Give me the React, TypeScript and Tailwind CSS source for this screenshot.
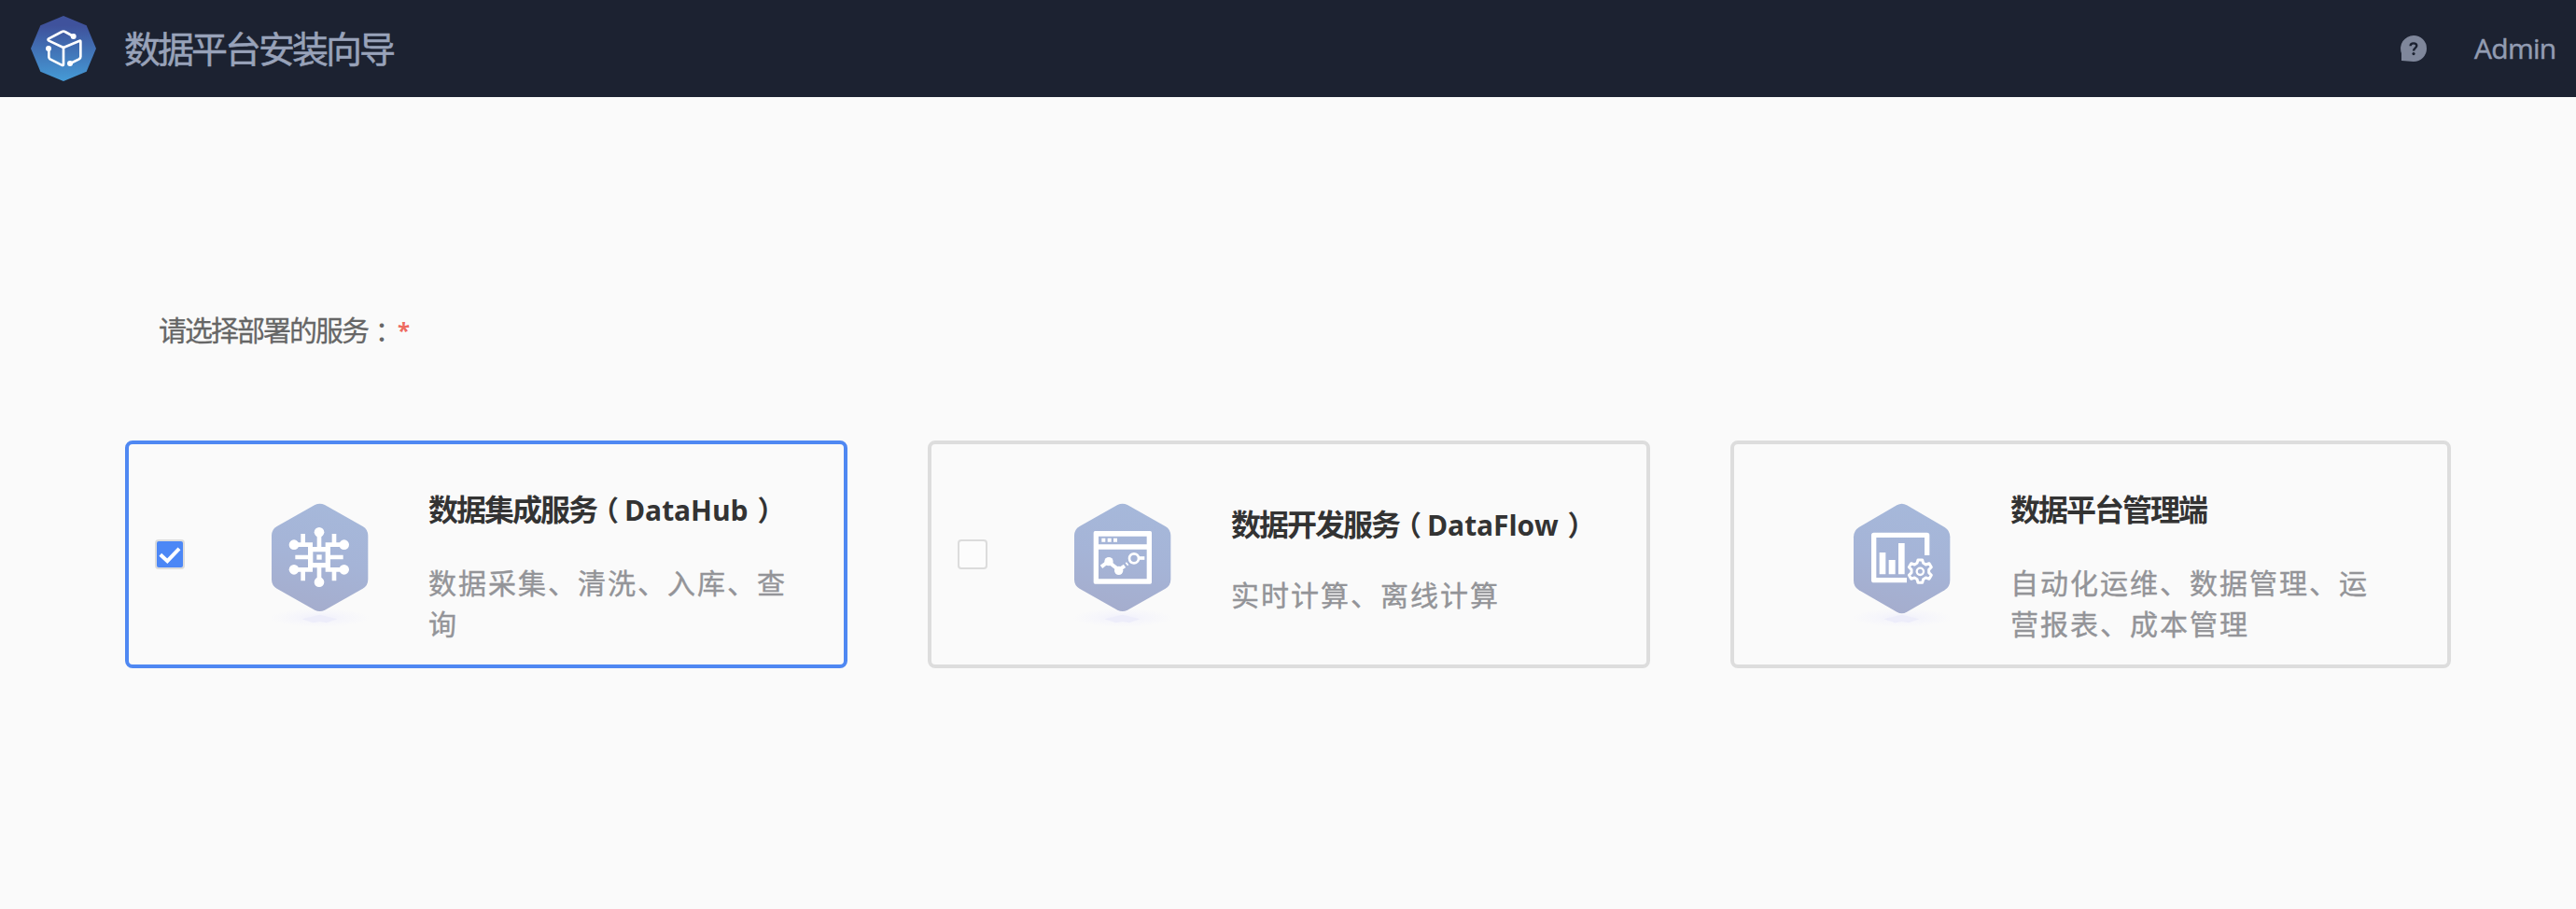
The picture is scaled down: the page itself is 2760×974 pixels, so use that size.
import React from "react";

const Logo = () => (
  <svg className="h-[70px] w-[70px] shrink-0" viewBox="99 51 210 210" fill="none">
    <defs>
      <linearGradient id="logo" x1="0" y1="0" x2="0" y2="1">
        <stop offset="0.15" stopColor="#3f529c" />
        <stop offset="1" stopColor="#459bd6" />
      </linearGradient>
    </defs>
    <path d="M204 51L278 82L309 156L278 230L204 261L130 230L99 156L130 82Z" fill="url(#logo)" />
    <g stroke="#fff" strokeWidth="8" strokeLinecap="round" strokeLinejoin="round">
      <path d="M236 117L209 102Q204 99 199 102L157 124Q152 128 157 131L204 153L256 131Q259 130 259 134V182Q259 187 254 190L226 204" />
      <path d="M204 153V207Q204 212 198 209L161 190Q157 187 157 183V157" />
    </g>
    <circle cx="236" cy="117" r="9" fill="#fff" />
    <circle cx="156" cy="156" r="9" fill="#fff" />
    <circle cx="225" cy="204" r="9" fill="#fff" />
  </svg>
);

const HelpIcon = () => (
  <svg className="h-7 w-7" viewBox="0 0 28 28" fill="none">
    <path d="M14 0A14 14 0 1 1 14 28L1 27V19A14 14 0 0 1 14 0Z" fill="#7f879b" />
    <path d="M10.6 11.2C10.6 9.3 12 8.4 14 8.4S17.3 9.5 17.3 11.1C17.3 13.4 14 13.4 14 16.6" stroke="#1c2231" strokeWidth="2.4" />
    <circle cx="14" cy="19.6" r="1.6" fill="#1c2231" />
  </svg>
);

const HexBase = ({ id, children, stretch }: { id: string; children: React.ReactNode; stretch?: boolean }) => (
  <svg className="h-[144px] w-[180px] shrink-0" viewBox="402 222 540 432" fill="none">
    <defs>
      <linearGradient id={id} x1="0.6" y1="0" x2="0.4" y2="1">
        <stop offset="0" stopColor="#a6b8da" />
        <stop offset="0.5" stopColor="#a5b4d7" />
        <stop offset="1" stopColor="#a5adcd" />
      </linearGradient>
      <radialGradient id={id + "s"}>
        <stop offset="0" stopColor="#f0f0fb" />
        <stop offset="0.5" stopColor="#f6f6fb" />
        <stop offset="1" stopColor="#fafafa" />
      </radialGradient>
    </defs>
    <ellipse cx="668" cy="606" rx="160" ry="30" fill={`url(#${id}s)`} />
    <path d="M610 610L668 596L724 610L690 622L668 618L646 622Z" fill="#ededfa" />
    <path
      d={
        stretch
          ? "M652 244Q668 235 684 244L806 315Q823 326 823 346V486Q823 506 806 517L684 587Q668 596 652 587L530 517Q513 506 513 486V346Q513 326 530 315Z"
          : "M652 243Q668 235 684 243L806 312Q823 322 823 342V482Q823 502 806 512L684 581Q668 589 652 581L530 512Q513 502 513 482V342Q513 322 530 312Z"
      }
      fill={`url(#${id})`}
    />
    {children}
  </svg>
);

const HubIcon = () => (
  <HexBase id="hub">
    <g stroke="#fff" strokeWidth="14">
      <path d="M666 332V385M666 440V491M589 411H635M697 411H743" />
      <path d="M585 371H638V392M614 336V371M746 371H693V392M714 336V371" />
      <path d="M585 451H638V432M614 487V451M746 451H693V432M714 487V451" />
      <path d="M638 386H694V437H638Z" strokeWidth="16" />
    </g>
    <g fill="#fff">
      <circle cx="666" cy="331" r="16" />
      <circle cx="666" cy="491" r="16" />
      <circle cx="585" cy="371" r="16" />
      <circle cx="746" cy="371" r="16" />
      <circle cx="585" cy="451" r="16" />
      <circle cx="746" cy="451" r="16" />
      <path d="M658 403H674V419H658Z" />
    </g>
  </HexBase>
);

const FlowIcon = () => (
  <HexBase id="flow">
    <path
      fill="#fff"
      fillRule="evenodd"
      d="M580 327H757Q762 327 762 332V492Q762 497 757 497H580Q575 497 575 492V332Q575 327 580 327ZM591 344V370H746V344ZM591 386V481H746V386Z"
    />
    <path d="M601 350H613V362H601ZM620 350H632V362H620ZM639 350H651V362H639Z" fill="#fff" />
    <g stroke="#fff">
      <path d="M600 442L622 425L656 452L675 439" strokeWidth="12" />
      <path d="M679 428L686 437" strokeWidth="5" />
      <path d="M691 423L696 430" strokeWidth="5" />
      <path d="M722 414H739" strokeWidth="11" />
      <circle cx="705" cy="415" r="15" strokeWidth="8" />
    </g>
    <circle cx="624" cy="425" r="14" fill="#fff" />
    <circle cx="656" cy="454" r="14" fill="#fff" />
  </HexBase>
);

const AdminIcon = () => (
  <HexBase id="admin" stretch>
    <g transform="translate(75 0)">
      <path d="M674 405V340H503V485H609" stroke="#fff" strokeWidth="16" strokeLinejoin="round" />
      <path d="M521 396H541V466H521ZM551 420H572V466H551ZM582 366H602V466H582Z" fill="#fff" />
      <path
        d="M645 420H659L662 430L670 435L681 431L688 443L680 451V461L688 469L681 481L670 477L662 482L659 493H645L642 482L634 477L623 481L616 469L624 461V451L616 443L623 431L634 435L642 430Z"
        stroke="#fff"
        strokeWidth="9"
        strokeLinejoin="round"
      />
      <circle cx="652" cy="457" r="11" stroke="#fff" strokeWidth="7" />
    </g>
  </HexBase>
);

const Checkbox = ({ checked }: { checked: boolean }) => (
  <span
    role="checkbox"
    aria-checked={checked}
    className={`ml-7 mr-14 block h-8 w-8 shrink-0 rounded-[4px] border-2 border-[#dcdcdc] ${checked ? "bg-[#4c87f6]" : "bg-[#fcfcfc]"}`}
  >
    {checked && (
      <svg className="h-7 w-7" viewBox="0 0 28 28" fill="none">
        <path d="M3.8 14.2L11.3 21.2L24 7.8" stroke="#fff" strokeWidth="4" />
      </svg>
    )}
  </span>
);

type Service = {
  name: string;
  product?: string;
  desc: string;
  icon: React.ReactNode;
  checked?: boolean;
};

const services: Service[] = [
  { name: "数据集成服务", product: "DataHub", desc: "数据采集、清洗、入库、查询", icon: <HubIcon />, checked: true },
  { name: "数据开发服务", product: "DataFlow", desc: "实时计算、离线计算", icon: <FlowIcon />, checked: false },
  { name: "数据平台管理端", desc: "自动化运维、数据管理、运营报表、成本管理", icon: <AdminIcon /> },
];

const Card = ({ name, product, desc, icon, checked }: Service) => {
  const selectable = checked !== undefined;
  const single = checked === false;
  return (
    <div
      className={`flex h-[244px] items-center rounded-lg border-4 ${checked ? "border-[#4f88f2]" : "border-[#dddddd]"}`}
    >
      {selectable ? <Checkbox checked={!!checked} /> : <span className="w-[91px] shrink-0" />}
      <div className="mt-6 shrink-0">{icon}</div>
      <div className={`ml-[25px] w-[392px] shrink-0 self-start ${single ? "pt-[64px]" : "pt-12"}`}>
        <h2 className="h-[44px] text-[32px] leading-[44px] font-bold tracking-[-2px] whitespace-nowrap text-[#333333]">
          {name}
          {product && (
            <>
              <span className="mr-2 ml-[9px] text-[30px] [font-feature-settings:'halt']">（</span>
              <span className="text-[30px] tracking-[-0.1px]">{product}</span>
              <span className="ml-[10px] text-[30px] [font-feature-settings:'halt']">）</span>
            </>
          )}
        </h2>
        <p
          className={`text-[30px] leading-[44px] tracking-[2px] text-[#939498] [-webkit-text-stroke:0.4px_#939498] ${single ? "mt-[32px]" : "mt-[35px]"}`}
        >
          {desc}
        </p>
      </div>
    </div>
  );
};

export default function App() {
  return (
    <div className="flex h-[974px] w-[2760px] flex-col overflow-hidden bg-[#fafafa] font-['Open_Sans','Noto_Sans_CJK_SC',sans-serif]">
      <header className="flex h-[104px] shrink-0 items-center bg-[#1c2231] pr-[21px] pl-[33px]">
        <Logo />
        <h1 className="ml-[30px] text-[39px] leading-[52px] tracking-[-3px] text-[#98a2b9] [-webkit-text-stroke:0.5px_#98a2b9]">
          数据平台安装向导
        </h1>
        <div className="ml-auto flex items-center gap-[51px]">
          <HelpIcon />
          <span className="w-[88px] text-[30px] leading-[44px] tracking-[-0.7px] text-[#929cb2] [-webkit-text-stroke:0.5px_#929cb2]">
            Admin
          </span>
        </div>
      </header>
      <main className="px-[134px] pt-[228px]">
        <div className="flex h-[44px] items-center pl-[36px] text-[30px] leading-[44px] tracking-[-2px] text-[#666666]">
          <span className="[-webkit-text-stroke:0.3px_#666666]">请选择部署的服务</span>
          <span className="w-7 font-['Noto_Sans_CJK_TC',sans-serif]">：</span>
          <span className="ml-1 text-[24px] font-bold text-[#ee6a60]">*</span>
        </div>
        <div className="mt-24 grid grid-cols-[774px_774px_772px] gap-[86px]">
          {services.map((s) => (
            <Card key={s.name} {...s} />
          ))}
        </div>
      </main>
    </div>
  );
}
